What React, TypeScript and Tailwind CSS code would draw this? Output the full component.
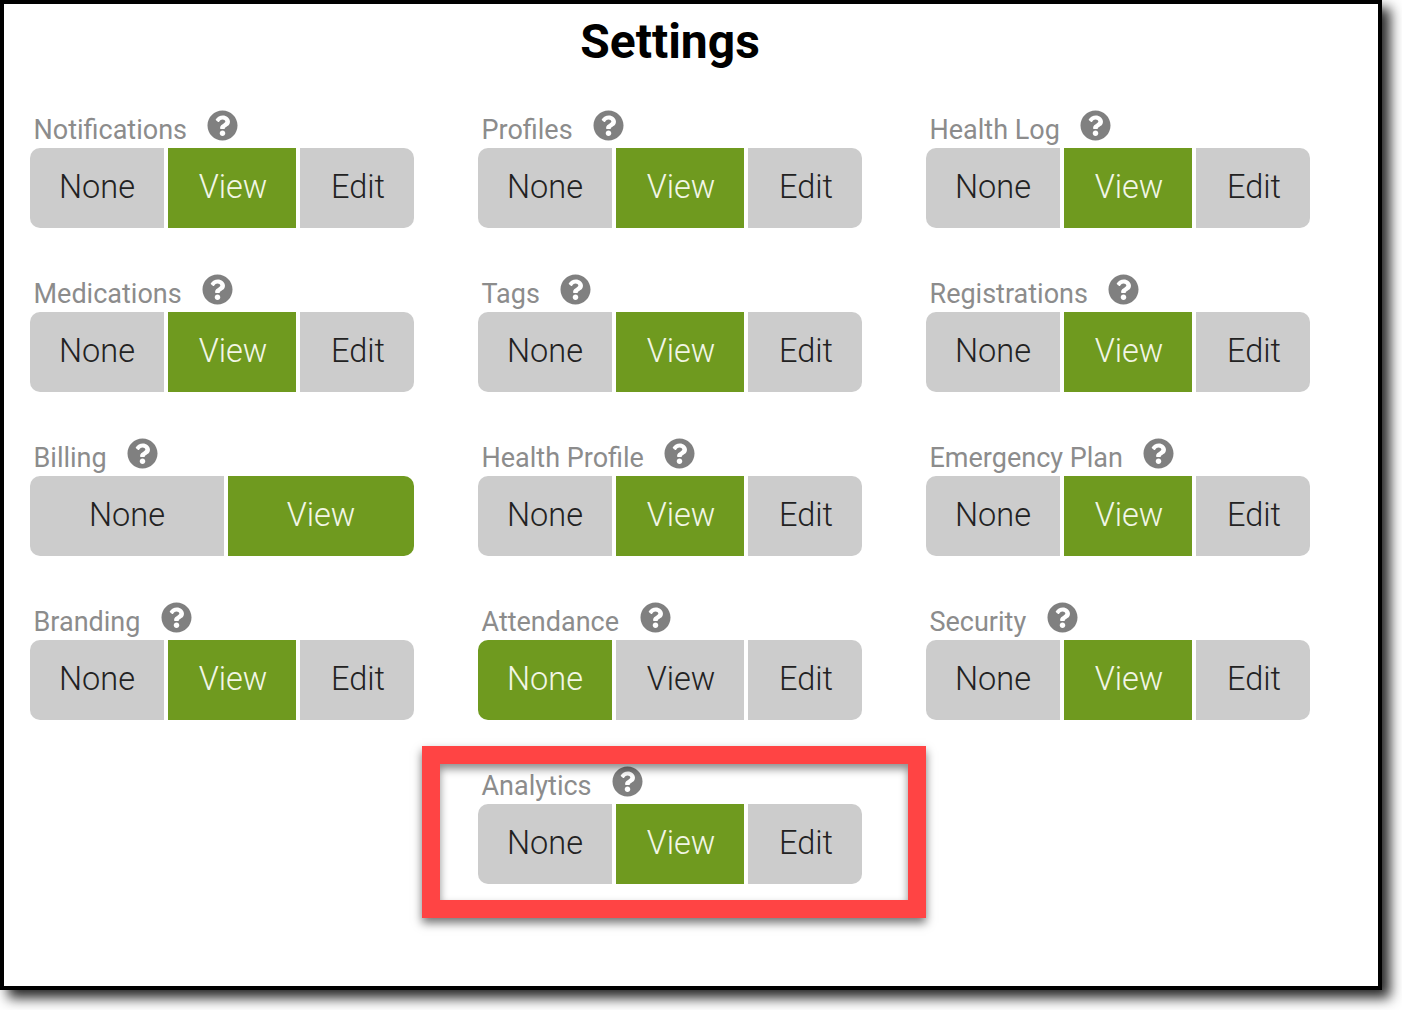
import { FaQuestionCircle } from 'react-icons/fa'

type Level = 'None' | 'View' | 'Edit'

const settings: { label: string; active: Level; noEdit?: boolean }[] = [
  { label: 'Notifications', active: 'View' },
  { label: 'Profiles', active: 'View' },
  { label: 'Health Log', active: 'View' },
  { label: 'Medications', active: 'View' },
  { label: 'Tags', active: 'View' },
  { label: 'Registrations', active: 'View' },
  { label: 'Billing', active: 'View', noEdit: true },
  { label: 'Health Profile', active: 'View' },
  { label: 'Emergency Plan', active: 'View' },
  { label: 'Branding', active: 'View' },
  { label: 'Attendance', active: 'None' },
  { label: 'Security', active: 'View' },
]

function Segment({ text, active, className }: { text: string; active: boolean; className: string }) {
  return (
    <div
      className={`flex h-20 items-center justify-center pb-[2px] text-[32.5px] font-light ${
        active ? 'bg-[#6f9a1f] text-[#f2f6e6]' : 'bg-[#cccccc] text-[#222222]'
      } ${className}`}
    >
      {text}
    </div>
  )
}

function Setting({ label, active, noEdit }: { label: string; active: Level; noEdit?: boolean }) {
  return (
    <div className="flex flex-col">
      <div className="flex h-[84px] items-start pt-[47px] pl-[3.5px]">
        <span className="text-[27px] leading-[38px] font-normal text-[#8c8c8c]">{label}</span>
        <FaQuestionCircle className="mt-[-1px] ml-[20.5px] text-[#808080]" size={31} />
      </div>
      {noEdit ? (
        <div className="flex gap-1">
          <Segment text="None" active={active === 'None'} className="w-[194px] rounded-l-[10px]" />
          <Segment text="View" active={active === 'View'} className="w-[186px] rounded-r-[10px]" />
        </div>
      ) : (
        <div className="flex gap-1">
          <Segment text="None" active={active === 'None'} className="w-[134px] rounded-l-[10px]" />
          <Segment text="View" active={active === 'View'} className="w-32 pl-[2px]" />
          <Segment text="Edit" active={active === 'Edit'} className="w-[114px] rounded-r-[10px] pl-[2px]" />
        </div>
      )}
    </div>
  )
}

export default function App() {
  return (
    <div className="h-[1010px] w-[1402px] overflow-hidden bg-white font-['Roboto',sans-serif]">
      <div className="h-[990px] w-[1382px] border-4 border-black bg-white pl-[26px] shadow-[8px_8px_12px_rgba(0,0,0,0.85)]">
        <div className="w-[1280px]">
          <h1 className="mt-[11px] h-[53px] text-center text-[48px] leading-[53px] font-bold text-black">Settings</h1>
          <div className="-mt-1 grid grid-cols-[384px_384px_384px] gap-x-16">
            {settings.map((s) => (
              <Setting key={s.label} {...s} />
            ))}
            <div className="relative col-start-2">
              <Setting label="Analytics" active="View" />
              {/* red highlight box */}
              <div className="pointer-events-none absolute top-[26px] -left-14 h-[172px] w-[504px] border-[18px] border-[#ff4444] shadow-[0_5px_9px_rgba(0,0,0,0.55),inset_0_5px_9px_rgba(0,0,0,0.45)]"></div>
            </div>
          </div>
        </div>
      </div>
    </div>
  )
}
